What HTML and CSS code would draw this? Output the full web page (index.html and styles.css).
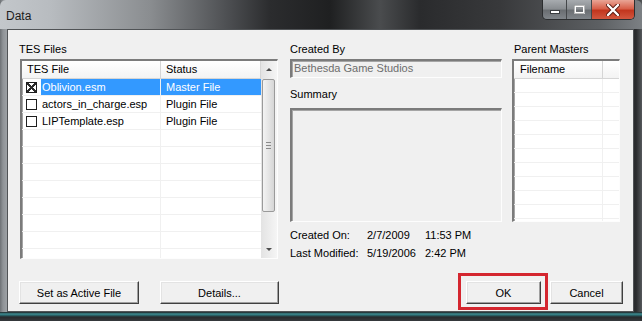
FILE: index.html
```html
<!DOCTYPE html>
<html lang="en">
<head>
  <meta charset="UTF-8" />
  <title>Data</title>
  <link rel="stylesheet" href="styles.css">
</head>
<body>

  <div class="window">
    <div class="titlebar">
      <span class="title">Data</span>
      <div class="controls">
        <span class="ctl min"><svg width="10" height="4" viewBox="0 0 10 4"><rect x="0.5" y="0.5" width="9" height="3" fill="#fff" stroke="#3a3d40" stroke-width="1"/></svg></span>
        <span class="ctl max"><svg width="11" height="9" viewBox="0 0 11 9"><rect x="1" y="1" width="9" height="7" fill="none" stroke="#fff" stroke-width="2"/><rect x="0.5" y="0.5" width="10" height="8" fill="none" stroke="#3a3d40" stroke-width="0.6" opacity="0.6"/></svg></span>
        <span class="ctl close"><svg width="14" height="12" viewBox="0 0 14 12"><path d="M2 1 L12 11 M12 1 L2 11" stroke="#5a1a12" stroke-width="4.2" stroke-linecap="round"/><path d="M2 1 L12 11 M12 1 L2 11" stroke="#fff" stroke-width="2.4" stroke-linecap="round"/></svg></span>
      </div>
    </div>

    <div class="client">
      <div class="panes">

        <!-- TES files -->
        <div class="pane files">
          <div class="label">TES Files</div>
          <div class="listbox files-box">
            <div class="grid">
              <div class="head">
                <span class="hcell name-col">TES File</span>
                <span class="hcell status-col">Status</span>
              </div>
              <div class="row selected">
                <span class="cell name-col"><span class="check checked"></span><span class="pick">Oblivion.esm</span></span>
                <span class="cell status-col">Master File</span>
              </div>
              <div class="row">
                <span class="cell name-col"><span class="check"></span><span class="pick">actors_in_charge.esp</span></span>
                <span class="cell status-col">Plugin File</span>
              </div>
              <div class="row">
                <span class="cell name-col"><span class="check"></span><span class="pick">LIPTemplate.esp</span></span>
                <span class="cell status-col">Plugin File</span>
              </div>
              <div class="row"><span class="cell name-col"></span><span class="cell status-col"></span></div>
              <div class="row"><span class="cell name-col"></span><span class="cell status-col"></span></div>
              <div class="row"><span class="cell name-col"></span><span class="cell status-col"></span></div>
              <div class="row"><span class="cell name-col"></span><span class="cell status-col"></span></div>
              <div class="row"><span class="cell name-col"></span><span class="cell status-col"></span></div>
              <div class="row"><span class="cell name-col"></span><span class="cell status-col"></span></div>
              <div class="row"><span class="cell name-col"></span><span class="cell status-col"></span></div>
              <div class="row"><span class="cell name-col"></span><span class="cell status-col"></span></div>
            </div>
            <div class="scrollbar">
              <div class="arrow up"></div>
              <div class="thumb"><span class="grip"></span></div>
              <div class="track"></div>
              <div class="arrow down"></div>
            </div>
          </div>
        </div>

        <!-- file info -->
        <div class="pane info">
          <div class="label">Created By</div>
          <div class="field">Bethesda Game Studios</div>
          <div class="label summary-label">Summary</div>
          <div class="field summary"></div>
          <div class="dates">
            <span>Created On:</span><span>2/7/2009</span><span>11:53 PM</span>
            <span>Last Modified:</span><span>5/19/2006</span><span>2:42 PM</span>
          </div>
        </div>

        <!-- parent masters -->
        <div class="pane masters">
          <div class="label">Parent Masters</div>
          <div class="listbox masters-box">
            <div class="grid">
              <div class="head">
                <span class="hcell file-col">Filename</span>
                <span class="hcell rest-col"></span>
              </div>
              <div class="mrow"><span class="cell file-col"></span><span class="cell rest-col"></span></div>
              <div class="mrow"><span class="cell file-col"></span><span class="cell rest-col"></span></div>
              <div class="mrow"><span class="cell file-col"></span><span class="cell rest-col"></span></div>
              <div class="mrow"><span class="cell file-col"></span><span class="cell rest-col"></span></div>
              <div class="mrow"><span class="cell file-col"></span><span class="cell rest-col"></span></div>
              <div class="mrow"><span class="cell file-col"></span><span class="cell rest-col"></span></div>
              <div class="mrow"><span class="cell file-col"></span><span class="cell rest-col"></span></div>
              <div class="mrow"><span class="cell file-col"></span><span class="cell rest-col"></span></div>
              <div class="mrow"><span class="cell file-col"></span><span class="cell rest-col"></span></div>
              <div class="mrow"><span class="cell file-col"></span><span class="cell rest-col"></span></div>
              <div class="mrow"><span class="cell file-col"></span><span class="cell rest-col"></span></div>
            </div>
          </div>
        </div>

      </div>

      <div class="actions">
        <button class="btn active-btn">Set as Active File</button>
        <button class="btn details-btn">Details...</button>
        <div class="spacer"></div>
        <div class="marked">
          <button class="btn ok-btn">OK</button>
        </div>
        <button class="btn cancel-btn">Cancel</button>
      </div>
    </div>

    <div class="bottom-frame"></div>
  </div>

</body>
</html>
```

FILE: styles.css
```css
body {
  margin: 0;
  background: #2e3134;
  font-family: "Liberation Sans", Arial, sans-serif;
  font-size: 11px;
  color: #000;
}

.window {
  width: 642px;
  height: 321px;
  overflow: hidden;
  display: flex;
  flex-direction: column;
  background: linear-gradient(to right, #6d7175 0px, #8f9397 3px, #9da1a5 7px, #4a4d50 60px, #3a3c3f 600px, #2a2c2e 636px, #55585b 642px);
}

/* title bar */

.titlebar {
  height: 29px;
  flex: none;
  display: flex;
  justify-content: space-between;
  align-items: flex-start;
  border-radius: 6px 6px 0 0;
  background: linear-gradient(to right, #c3c7cb 0px, #b8bcc0 50px, #8a8d90 150px, #4b4d50 230px, #2b2c2e 270px, #1f2021 330px, #4a4c4e 380px, #2a2b2d 420px, #38393b 500px, #5d6063 600px, #7c8084 642px);
}

.title {
  padding: 10px 0 0 6px;
  font-size: 12px;
  line-height: 13px;
  color: #1c1c1c;
}

.controls {
  display: flex;
  margin-right: 7px;
  border: 1px solid #2c2e30;
  border-top: none;
  border-radius: 0 0 5px 5px;
  overflow: hidden;
}

.ctl {
  height: 19px;
  display: flex;
  align-items: center;
  justify-content: center;
  background: linear-gradient(to bottom, #a7abaf 0%, #8a8e92 45%, #6a6e72 55%, #80858a 100%);
  border-right: 1px solid #44474a;
}

.min {
  width: 23px;
  align-items: flex-end;
}

.min svg {
  margin-bottom: 5px;
}

.max {
  width: 24px;
}

.close {
  width: 42px;
  border-right: none;
  background: linear-gradient(to bottom, #e9a596 0%, #d8604a 45%, #c2361e 55%, #d2573f 100%);
}

/* client area */

.client {
  flex: none;
  width: 627px;
  height: 283px;
  margin-left: 7px;
  box-sizing: border-box;
  border: 1px solid #505356;
  background: #f0f0f0;
  padding: 13px 0 0 11px;
}

.panes {
  display: flex;
  height: 223px;
}

.label {
  height: 13px;
  line-height: 13px;
  margin-bottom: 3px;
}

.files {
  width: 259px;
}

.info {
  width: 212px;
  margin-left: 12px;
}

.masters {
  width: 109px;
  margin-left: 10px;
}

.masters .label {
  margin-left: 2px;
}

/* list views */

.listbox {
  box-sizing: border-box;
  background: #fff;
  border-style: solid;
  border-width: 2px 1px 1px 2px;
  border-color: #7b7b7b #fdfdfd #fdfdfd #7b7b7b;
  box-shadow: inset 1px 1px 0 #a5a5a5;
  display: flex;
  overflow: hidden;
}

.files-box {
  margin-left: 1px;
  width: 258px;
  height: 200px;
}

.masters-box {
  width: 108px;
  height: 163px;
}

.grid {
  flex: 1;
  overflow: hidden;
}

.head {
  display: flex;
  height: 18px;
  box-sizing: border-box;
  border-bottom: 1px solid #d5d5d5;
  background: linear-gradient(to bottom, #ffffff, #f3f3f3);
}

.hcell {
  box-sizing: border-box;
  line-height: 17px;
  padding-left: 5px;
  border-right: 1px solid #d5d5d5;
}

.row {
  display: flex;
  height: 17px;
  box-sizing: border-box;
  border-bottom: 1px solid #f0f0f0;
}

.mrow {
  display: flex;
  height: 14px;
  box-sizing: border-box;
  border-bottom: 1px solid #f0f0f0;
}

.cell {
  box-sizing: border-box;
  line-height: 16px;
  white-space: nowrap;
}

.name-col {
  width: 139px;
  flex: none;
}

.status-col {
  width: 100px;
  flex: none;
}

.files-box .cell.name-col {
  display: flex;
  align-items: center;
  border-right: 1px solid #f0f0f0;
}

.files-box .cell.status-col {
  padding-left: 5px;
}

.check {
  width: 9px;
  height: 9px;
  margin: 0 6px 0 4px;
  border: 1px solid #1e1e1e;
  background: #fff;
  flex: none;
}

.check.checked {
  background:
    linear-gradient(45deg, transparent 42%, #2b2b2b 42%, #2b2b2b 58%, transparent 58%),
    linear-gradient(-45deg, transparent 42%, #2b2b2b 42%, #2b2b2b 58%, transparent 58%),
    #fff;
}

.pick {
  padding: 0 1px;
  line-height: 16px;
  margin-left: -2px;
}

.row.selected .pick {
  flex: 1;
  background: #3399ff;
  color: #fff;
}

.row.selected .status-col {
  background: #3399ff;
  color: #fff;
}

.file-col {
  width: 89px;
  flex: none;
}

.masters-box .hcell.file-col {
  padding-left: 6px;
}

.masters-box .cell.file-col {
  border-right: 1px solid #f0f0f0;
}

.rest-col {
  flex: 1;
}

.masters-box .hcell.rest-col {
  border-right: none;
}

/* scrollbar */

.scrollbar {
  width: 16px;
  flex: none;
  display: flex;
  flex-direction: column;
  background: linear-gradient(to right, #e3e3e3, #f5f5f5);
}

.arrow {
  height: 17px;
  flex: none;
  position: relative;
}

.arrow::after {
  content: "";
  position: absolute;
  left: 5px;
  top: 7px;
  border-left: 3px solid transparent;
  border-right: 3px solid transparent;
}

.arrow.up::after {
  border-bottom: 3px solid #4d4d4d;
}

.arrow.down::after {
  border-top: 3px solid #4d4d4d;
}

.thumb {
  height: 133px;
  flex: none;
  margin: 1px 0 0 1px;
  width: 13px;
  box-sizing: border-box;
  border: 1px solid #9a9a9a;
  border-radius: 2px;
  background: linear-gradient(to right, #f3f3f3, #e2e2e2 60%, #d6d6d6);
  display: flex;
  align-items: center;
  justify-content: center;
}

.grip {
  width: 5px;
  height: 5px;
  border-top: 1px solid #8a8a8a;
  border-bottom: 1px solid #8a8a8a;
  background: linear-gradient(to bottom, transparent 2px, #8a8a8a 2px, #8a8a8a 3px, transparent 3px);
}

.track {
  flex: 1;
}

/* info pane */

.field {
  box-sizing: border-box;
  height: 19px;
  border-style: solid;
  border-width: 2px 1px 1px 2px;
  border-color: #7b7b7b #fdfdfd #fdfdfd #7b7b7b;
  box-shadow: inset 1px 1px 0 #a5a5a5;
  background: #f0f0f0;
  color: #6d6d6d;
  line-height: 15px;
  padding-left: 2px;
}

.summary-label {
  margin-top: 10px;
  margin-bottom: 7px;
}

.field.summary {
  height: 114px;
}

.dates {
  display: grid;
  grid-template-columns: 77px 58px auto;
  grid-auto-rows: 18px;
  margin-top: 7px;
  line-height: 13px;
}

/* buttons */

.actions {
  display: flex;
  align-items: flex-start;
  padding-top: 7px;
}

.btn {
  font-family: inherit;
  font-size: 11px;
  color: #000;
  height: 23px;
  padding: 0;
  box-sizing: border-box;
  background: #f0f0f0;
  border-style: solid;
  border-width: 1px;
  border-color: #ffffff #404040 #404040 #ffffff;
  box-shadow: inset -1px -1px 0 #a0a0a0, inset 1px 1px 0 #e3e3e3;
}

.active-btn {
  width: 120px;
  margin-top: 8px;
}

.details-btn {
  width: 119px;
  margin-top: 8px;
  margin-left: 21px;
}

.spacer {
  flex: 1;
}

.marked {
  border: 3px solid #d4262f;
  padding: 5px 4px 3px 5px;
}

.ok-btn {
  width: 75px;
  display: block;
}

.cancel-btn {
  width: 73px;
  margin-top: 8px;
  margin-left: 2px;
  margin-right: 10px;
}

.bottom-frame {
  flex: 1;
  background: linear-gradient(to bottom, #1d1f21 0px, #3f8d93 2px, #2a6e74 3px, #26292c 5px, #36393c 100%);
}
```
